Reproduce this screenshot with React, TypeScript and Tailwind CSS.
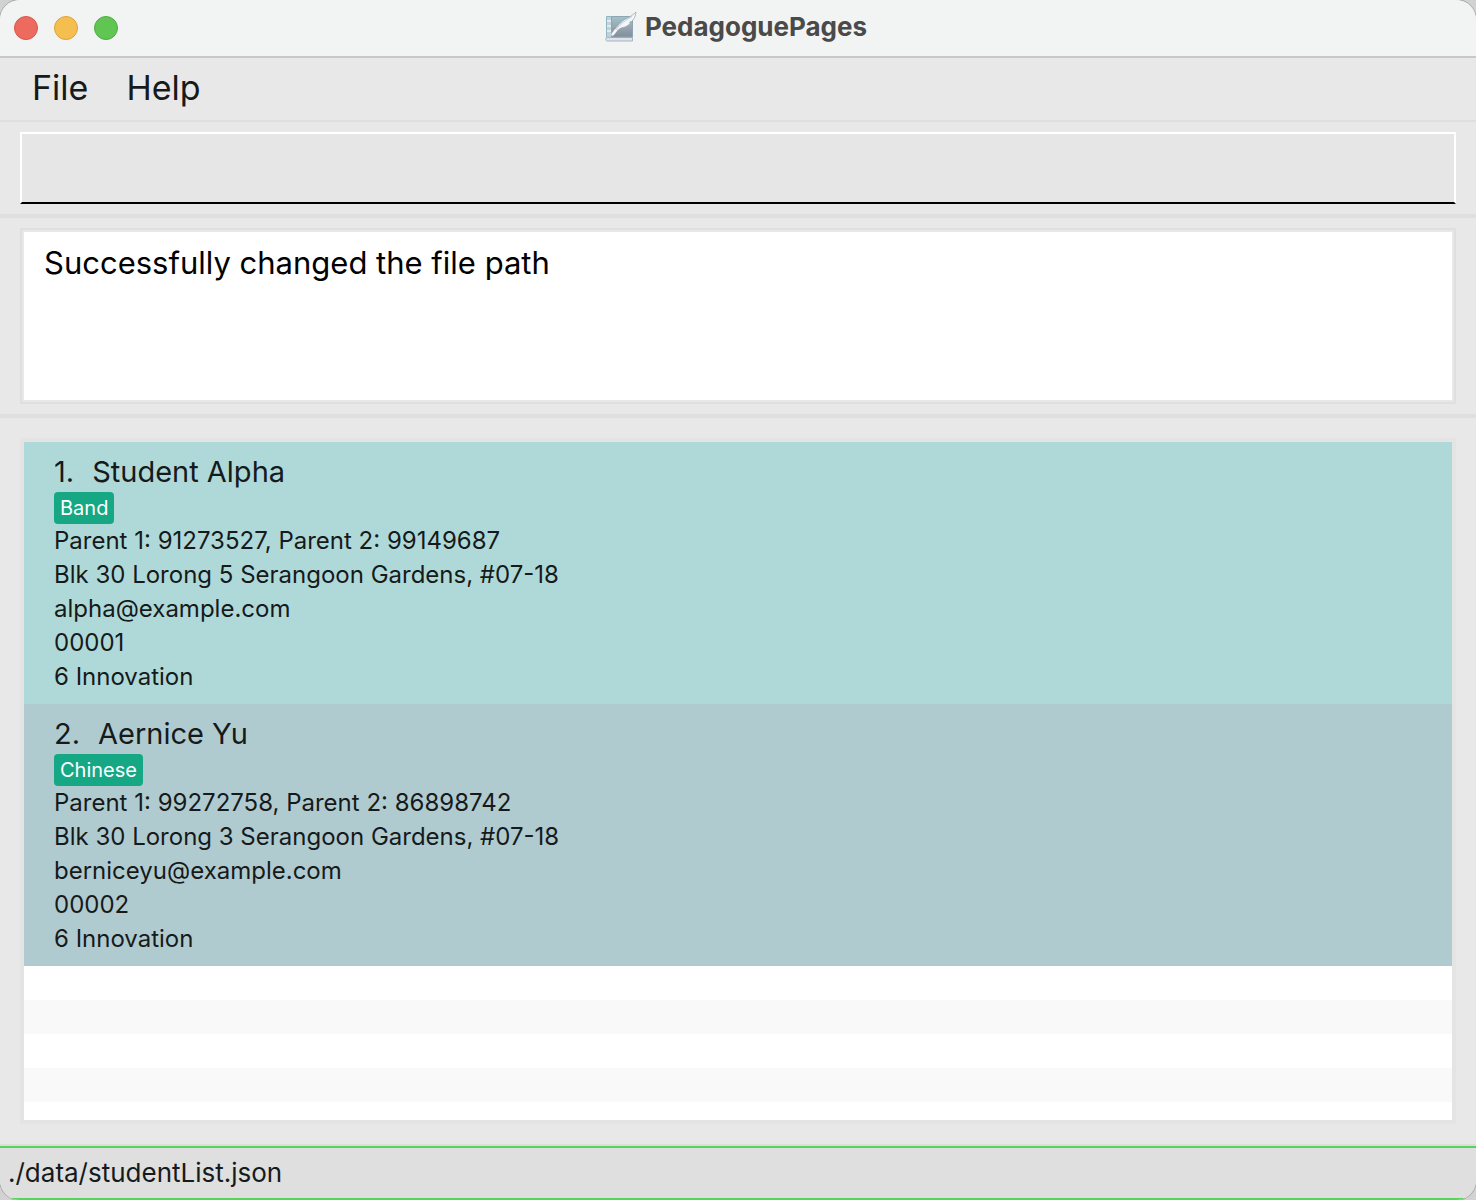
import React from "react";

type Student = {
  name: string;
  tag: string;
  details: string[];
};

const students: Student[] = [
  {
    name: "Student Alpha",
    tag: "Band",
    details: [
      "Parent 1: 91273527, Parent 2: 99149687",
      "Blk 30 Lorong 5 Serangoon Gardens, #07-18",
      "alpha@example.com",
      "00001",
      "6 Innovation",
    ],
  },
  {
    name: "Aernice Yu",
    tag: "Chinese",
    details: [
      "Parent 1: 99272758, Parent 2: 86898742",
      "Blk 30 Lorong 3 Serangoon Gardens, #07-18",
      "berniceyu@example.com",
      "00002",
      "6 Innovation",
    ],
  },
];

function AppIcon() {
  return (
    <svg width="32" height="32" viewBox="0 0 32 32" aria-hidden="true">
      <defs>
        <linearGradient id="cover" x1="0" y1="0" x2="0" y2="1">
          <stop offset="0" stopColor="#9fc3cd" />
          <stop offset="0.5" stopColor="#98a6b1" />
          <stop offset="1" stopColor="#838d9b" />
        </linearGradient>
      </defs>
      <path d="M1.500 5.500h5v21h-5z" fill="#bdd3db" stroke="#94b3c0" />
      <path d="M2.500 26.500h25v3.500h-25a1.750 1.750 0 0 1 0-3.500z" fill="#dde4ea" stroke="#a8b5c2" />
      <path d="M6.500 5.500h21v20.500h-21z" fill="url(#cover)" stroke="#8fa6b2" />
      <path d="M2 10h4M2 15h4M2 20h4" stroke="#eef4f6" strokeWidth="1.500" />
      <path
        d="M31 1c-.5 4.500-2 7.500-4.500 9.500l-1.800.5.600 1.200c-2.300 2.600-5 4-8.300 4.600-3 .8-5 3-7 6.200l-2 1c.8-4.500 3-8 6-10.500 2-2.500 5-5 8.500-6.500 3-1.500 6-3.500 8.500-6z"
        fill="#f4f6f7"
        stroke="#8da5b1"
        strokeWidth="0.700"
      />
      <path d="M27 5.500c-6 3.500-11.500 7-16 13.500" fill="none" stroke="#b4c3cb" strokeWidth="0.800" />
      <path d="M10.500 19.500 7.500 23.500" stroke="#f6f8f8" strokeWidth="2.500" strokeLinecap="round" />
    </svg>
  );
}

function TitleBar() {
  return (
    <header className="grid h-[58px] shrink-0 grid-cols-[1fr_auto_1fr] items-center border-b-2 border-[#c8c8c8] bg-[#f2f4f3] pr-[18px] pl-[14px]">
      <div className="flex gap-4">
        <button aria-label="Close" className="size-6 rounded-full border border-[#d9564b] bg-[#ec6a5e]" />
        <button aria-label="Minimize" className="size-6 rounded-full border border-[#dca23a] bg-[#f5bf4f]" />
        <button aria-label="Zoom" className="size-6 rounded-full border border-[#50ad42] bg-[#61c554]" />
      </div>
      <div className="flex items-center gap-2 pb-[2px]">
        <AppIcon />
        <h1 className="text-[26px] leading-8 font-bold text-[#4a4a4a]">PedagoguePages</h1>
      </div>
    </header>
  );
}

function StudentCard({ student, index }: { student: Student; index: number }) {
  return (
    <li className="px-[30px] py-[10px] odd:bg-[#afd9d8] even:bg-[#b0cbd0]">
      <h2 className="flex gap-[18px] text-[29px] leading-10">
        <span>{index}.</span>
        <span>{student.name}</span>
      </h2>
      <div className="flex">
        <span className="rounded bg-[#16a784] px-[6px] text-[20px] leading-8 text-white">{student.tag}</span>
      </div>
      {student.details.map((line) => (
        <p key={line} className="text-[24px] leading-[34px]">
          {line}
        </p>
      ))}
    </li>
  );
}

export default function App() {
  return (
    <div className="min-h-screen bg-[#d2d2d2] font-[Inter,sans-serif] text-[#161a1b]">
      <div className="flex min-h-screen flex-col overflow-hidden rounded-[20px] bg-[#e8e8e8] shadow-[0_0_0_1px_#aaaaaa]">
        <TitleBar />
        <nav className="flex h-16 shrink-0 items-center gap-[38px] border-b-2 border-[#dfdfdf] px-8 pb-[2px] text-[34px] leading-10">
          <button>File</button>
          <button>Help</button>
        </nav>
        <div className="border-b-4 border-[#dfdfdf] px-5 py-[10px]">
          <input
            aria-label="Command"
            className="block h-[72px] w-full border-2 border-white border-b-black bg-[#e6e6e6] px-5 text-[31px] outline-none"
          />
        </div>
        <div className="border-b-4 border-[#dfdfdf] px-5 py-[10px]">
          <div className="border-2 border-[#dfdfdf] p-[2px]">
            <textarea
              aria-label="Result"
              readOnly
              defaultValue="Successfully changed the file path"
              className="block h-[168px] w-full resize-none bg-white px-5 py-[10px] text-[31px] leading-[42px] text-black outline-none"
            />
          </div>
        </div>
        <main className="flex grow flex-col p-5">
          <div className="flex grow flex-col border-4 border-[#e4e4e4]">
            <ol>
              {students.map((student, i) => (
                <StudentCard key={student.name} student={student} index={i + 1} />
              ))}
            </ol>
            <div className="grow bg-[repeating-linear-gradient(#ffffff_0px_34px,#f9f9f9_34px_68px)]" />
          </div>
        </main>
        <footer className="border-t-2 border-[#dddddd]">
          <div className="border-y-2 border-[#57d55b] bg-[#dfdfdf] px-2 text-[26px] leading-[50px]">
            ./data/studentList.json
          </div>
        </footer>
      </div>
    </div>
  );
}
